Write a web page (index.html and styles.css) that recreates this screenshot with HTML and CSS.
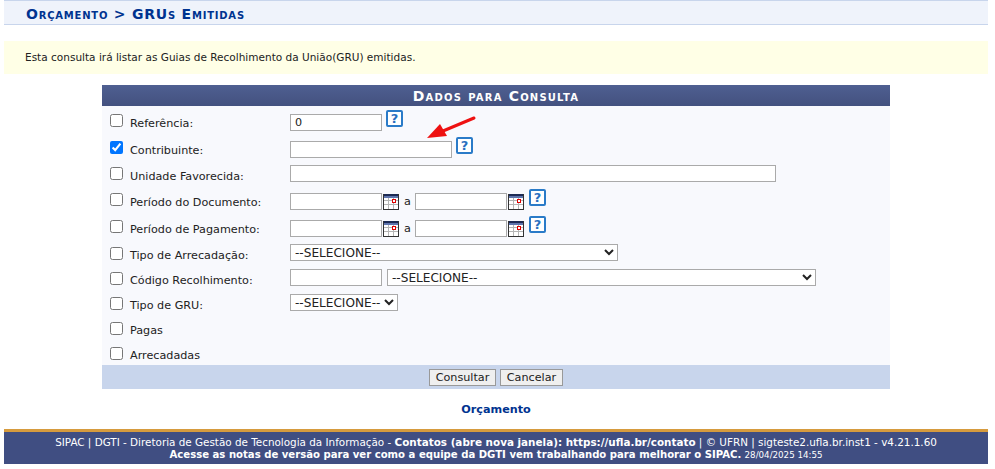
FILE: index.html
```html
<!DOCTYPE html>
<html lang="pt-BR">
<head>
<meta charset="utf-8">
<title>Orçamento &gt; GRUs Emitidas</title>
<link rel="stylesheet" href="styles.css">
</head>
<body>
<svg class="defs" width="0" height="0" aria-hidden="true">
  <symbol id="cal" viewBox="0 0 16 16">
    <rect width="16" height="16" fill="#fff"/>
    <path d="M0.500 5v11M5.500 4v12M10.500 4v12M15.500 4v12M0 6.500h16M0 10.500h16M0 15.500h16" stroke="#b5b5b5" fill="none"/>
    <rect width="16" height="2" fill="#1d2b55"/>
    <rect y="2" width="16" height="2" fill="#5e74ad"/>
    <path d="M0.500 0v16M15.500 0v16M0 15.500h16" stroke="#333" fill="none"/>
    <rect x="9.500" y="5.500" width="3" height="3" fill="#fff" stroke="#e00000"/>
  </symbol>
</svg>
<h2 class="title">Orçamento &gt; GRUs Emitidas</h2>
<p class="info">Esta consulta irá listar as Guias de Recolhimento da União(GRU) emitidas.</p>
<form class="form">
  <div class="caption">Dados para Consulta</div>
  <div class="rows">
    <div class="row h27">
      <label class="lbl"><input type="checkbox"><span>Referência:</span></label>
      <div class="ctl"><input class="in in-s" type="text" value="0"><span class="help">?</span></div>
    </div>
    <div class="row h24">
      <label class="lbl"><input type="checkbox" checked><span>Contribuinte:</span></label>
      <div class="ctl"><input class="in in-m" type="text"><span class="help">?</span></div>
    </div>
    <div class="row h28">
      <label class="lbl low2"><input type="checkbox"><span>Unidade Favorecida:</span></label>
      <div class="ctl"><input class="in in-l" type="text"></div>
    </div>
    <div class="row h27">
      <label class="lbl"><input type="checkbox"><span>Período do Documento:</span></label>
      <div class="ctl"><input class="in in-s" type="text"><svg class="cal"><use href="#cal"/></svg><span class="a">a</span><input class="in in-s" type="text"><svg class="cal"><use href="#cal"/></svg><span class="help help-d">?</span></div>
    </div>
    <div class="row h24">
      <label class="lbl"><input type="checkbox"><span>Período de Pagamento:</span></label>
      <div class="ctl"><input class="in in-s" type="text"><svg class="cal"><use href="#cal"/></svg><span class="a">a</span><input class="in in-s" type="text"><svg class="cal"><use href="#cal"/></svg><span class="help help-d">?</span></div>
    </div>
    <div class="row h25">
      <label class="lbl low3"><input type="checkbox"><span>Tipo de Arrecadação:</span></label>
      <div class="ctl"><select class="sel sel-a"><option>--SELECIONE--</option></select></div>
    </div>
    <div class="row h25">
      <label class="lbl low3"><input type="checkbox"><span>Código Recolhimento:</span></label>
      <div class="ctl"><input class="in in-s" type="text"><select class="sel sel-c"><option>--SELECIONE--</option></select></div>
    </div>
    <div class="row h25">
      <label class="lbl low3"><input type="checkbox"><span>Tipo de GRU:</span></label>
      <div class="ctl"><select class="sel sel-t"><option>--SELECIONE--</option></select></div>
    </div>
    <div class="row h25">
      <label class="lbl low3"><input type="checkbox"><span>Pagas</span></label>
    </div>
    <div class="row h21">
      <label class="lbl low3"><input type="checkbox"><span>Arrecadadas</span></label>
    </div>
    <svg class="arrow" viewBox="0 0 50 24" aria-hidden="true"><path d="M48 2 17 15" stroke="#ee1111" stroke-width="3" stroke-linecap="round" fill="none"/><path d="M1 22 14 8l7 12z" fill="#ee1111"/></svg>
  </div>
  <div class="actions"><button type="button" class="btn btn-c">Consultar</button><button type="button" class="btn btn-x">Cancelar</button></div>
</form>
<div class="back"><a href="#">Orçamento</a></div>
<footer class="foot">
  <div class="l1">SIPAC | DGTI - Diretoria de Gestão de Tecnologia da Informação - <b>Contatos (abre nova janela): https://ufla.br/contato</b> | © UFRN | sigteste2.ufla.br.inst1 - v4.21.1.60</div>
  <div class="l2"><b>Acesse as notas de versão para ver como a equipe da DGTI vem trabalhando para melhorar o SIPAC.</b> <small>28/04/2025 14:55</small></div>
</footer>
</body>
</html>
```
FILE: styles.css
```css
* { box-sizing: border-box; }
html, body { height: 100%; }
body {
  margin: 0;
  padding: 0 7px 0 4px;
  background: #fff;
  font-family: "DejaVu Sans", Verdana, sans-serif;
  font-size: 11px;
  color: #222;
  display: flex;
  flex-direction: column;
  height: 464px;
}
.defs { position: absolute; }
.title {
  margin: 0;
  height: 25px;
  padding: 0 0 0 22px;
  background: #eff3fb;
  border-top: 1px solid #c8d5ec;
  border-bottom: 1px solid #c8d5ec;
  color: #003390;
  font-size: 14px;
  font-weight: bold;
  font-variant: small-caps;
  line-height: 26px;
  letter-spacing: 0.780px;
}
.info {
  margin: 16px 0 0;
  height: 33px;
  padding: 0 0 0 21px;
  background: #ffffe6;
  font-size: 10.520px;
  line-height: 33px;
  color: #222;
}
.form { margin: 11px 98px 0; width: 788px; }
.caption {
  height: 21px;
  background: linear-gradient(#4f5f91, #43517f);
  color: #fff;
  text-align: center;
  font-weight: bold;
  font-size: 14px;
  font-variant: small-caps;
  letter-spacing: 1.200px;
  line-height: 22px;
}
.rows { position: relative; background: #f8f9fd; padding-top: 8px; }
.row { display: flex; align-items: flex-start; }
.h21 { height: 21px; }
.h24 { height: 24px; }
.h25 { height: 25px; }
.h27 { height: 27px; }
.h28 { height: 28px; }
.lbl { display: flex; width: 188px; align-items: flex-start; font-size: 11.200px; }
.low2 { margin-top: 2px; }
.low3 { margin-top: 3px; }
.lbl input { width: 13px; height: 13px; margin: 0 0 0 8px; accent-color: #0075ff; }
.lbl span { margin: 3px 0 0 7px; line-height: 13px; }
.low3 span { margin-top: 2px; }
.ctl { display: flex; align-items: flex-start; }
.in {
  height: 17px;
  border: 1px solid #aaa;
  background: #fff;
  padding: 1px 4px;
  margin: 0;
  font: 11.200px "DejaVu Sans", sans-serif;
  color: #222;
  border-radius: 0;
}
.in-s { width: 92px; }
.in-m { width: 162px; }
.in-l { width: 486px; }
.help {
  width: 17px;
  height: 17px;
  margin: -4px 0 0 4px;
  border: 2px solid #2a7bc8;
  border-radius: 2px;
  background: #fff;
  color: #2a6fc0;
  font-size: 13px;
  font-weight: bold;
  line-height: 13px;
  text-align: center;
}
.help-d { margin-left: 5px; }
.cal { width: 16px; height: 16px; margin: 1px 0 0 1px; }
.a { margin: 2px 5px 0 5px; line-height: 14px; width: 6px; font-size: 11.200px; }
.sel {
  height: 17px;
  border: 1px solid #aaa;
  background: #fff;
  padding: 0;
  margin: 0;
  font: 12.100px "DejaVu Sans", sans-serif;
  color: #222;
  border-radius: 0;
}
.sel-a { width: 328px; }
.sel-c { width: 429px; margin-left: 5px; }
.sel-t { width: 108px; }
.arrow { position: absolute; left: 324px; top: 10px; width: 50px; height: 24px; }
.actions {
  height: 24px;
  background: #c8d5ec;
  display: flex;
  justify-content: center;
  align-items: center;
  gap: 4px;
}
.btn {
  height: 17px;
  padding: 0;
  border: 1px solid #999;
  background: #efefef;
  font: 11.200px "DejaVu Sans", sans-serif;
  color: #222;
  border-radius: 0;
}
.btn-c { width: 67px; }
.btn-x { width: 63px; }
.back { margin-top: 14px; text-align: center; font-weight: bold; font-size: 11.200px; line-height: 14px; }
.back a { color: #003390; text-decoration: none; }
.foot {
  margin-top: auto;
  height: 35px;
  background: #404e82;
  border-top: 3px solid #d69b3e;
  color: #fff;
  text-align: center;
  padding-top: 4px;
}
.l1 { font-size: 10.400px; line-height: 12px; }
.l2 { font-size: 10.100px; line-height: 12px; margin-top: 1px; }
.foot small { font-size: 8.700px; }
```
